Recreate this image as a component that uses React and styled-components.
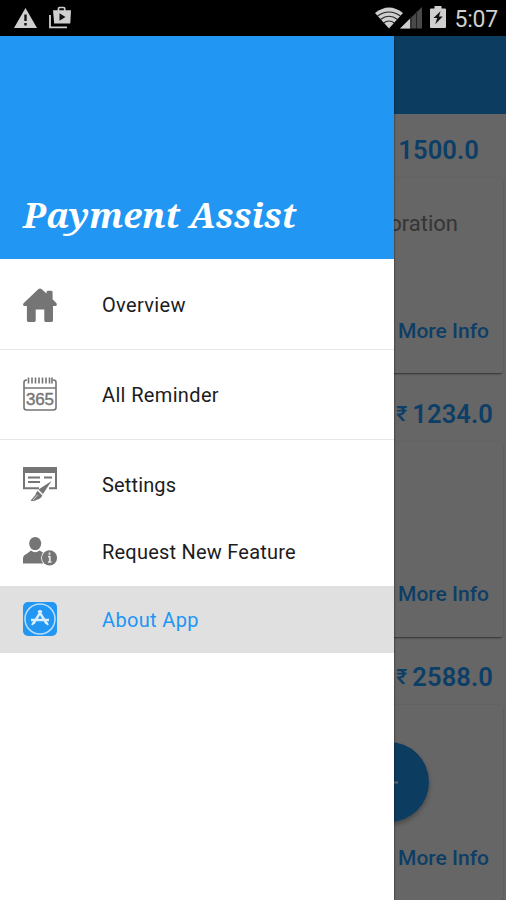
import React from "react";
import styled, { createGlobalStyle } from "styled-components";

const GlobalStyle = createGlobalStyle`
  * {
    box-sizing: border-box;
  }
  body {
    margin: 0;
    background: #000;
    font-family: Roboto, "Noto Sans", sans-serif;
  }
`

// whole phone screen
const Screen = styled.div`
  width: 506px;
  height: 900px;
  display: flex;
  flex-direction: column;
  overflow: hidden;
`

const StatusBar = styled.div`
  height: 36px;
  flex: none;
  display: flex;
  align-items: center;
  padding: 0 8px 0 13px;
  background: #000;
  color: #cfcfcf;
`

const StatusLeft = styled.div`
  display: flex;
  gap: 10px;
  flex: 1;
  padding-bottom: 2px;
`

const StatusRight = styled.div`
  display: flex;
  align-items: center;
`

const Network = styled.span`
  display: flex;
  padding-bottom: 1px;

  svg + svg {
    margin-left: -4px;
  }
`

const Battery = styled.span`
  display: flex;
  margin-left: 7px;
  padding-bottom: 2px;
`

const Clock = styled.span`
  margin-left: 8px;
  padding-top: 3px;
  font-size: 23px;
  line-height: 26px;
  letter-spacing: -0.2px;
`

const Body = styled.div`
  position: relative;
  flex: 1;
  overflow: hidden;
`

// page behind the drawer
const Page = styled.div`
  height: 864px;
  background: #fff;
`

const AppBar = styled.div`
  height: 78px;
  background: #2196f3;
`

const Reminder = styled.div`
  width: 503px;
  height: 263.5px;
  display: flex;
  flex-direction: column;
  align-items: flex-end;
`

const Amount = styled.div`
  height: 64px;
  display: flex;
  align-items: center;
  gap: 5px;
  padding: 8px ${(props) => props.$right}px 0 0;
  color: #1f9cff;
  font-size: 25.5px;
  font-weight: 600;
  letter-spacing: 0.1px;
`

const Rupee = styled.span`
  font-size: 21px;
  font-weight: 500;
`

const Details = styled.div`
  width: 100%;
  height: 195px;
  display: flex;
  flex-direction: column;
  align-items: flex-end;
  justify-content: space-between;
  padding: 33px 14px 29.5px 0;
  border-radius: 3px;
  box-shadow: 0 2px 2px -1px rgba(0, 0, 0, 0.5), 0 0 2px rgba(0, 0, 0, 0.15);
`

const Company = styled.span`
  margin-right: 31px;
  color: #858585;
  font-size: 22px;
  line-height: 26px;
`

const MoreInfo = styled.span`
  margin-top: auto;
  color: #1f9cff;
  font-size: 21px;
  font-weight: 500;
  line-height: 26px;
`

const Fab = styled.div`
  position: absolute;
  left: 349px;
  top: 706px;
  width: 80px;
  height: 80px;
  display: flex;
  align-items: center;
  justify-content: center;
  border-radius: 50%;
  background: #2196f3;
  box-shadow: 0 3px 5px rgba(0, 0, 0, 0.3);
`

const Scrim = styled.div`
  position: absolute;
  inset: 0;
  background: rgba(0, 0, 0, 0.6);
`

const Drawer = styled.div`
  position: absolute;
  left: 0;
  top: 0;
  bottom: 0;
  width: 394px;
  background: #fff;
  box-shadow: 0 0 2px rgba(0, 0, 0, 0.7);
`

const DrawerHeader = styled.div`
  height: 223px;
  display: flex;
  align-items: flex-end;
  padding: 0 0 21px 23px;
  background: #2196f3;
`

const Title = styled.h1`
  margin: 0;
  color: #fff;
  font-family: "Noto Serif", "DejaVu Serif Condensed", "DejaVu Serif", serif;
  font-size: 35px;
  font-style: italic;
  font-weight: 700;
  line-height: 46px;
  white-space: nowrap;
`

const Group = styled.div`
  padding: ${(props) => props.$pad};
  border-bottom: ${(props) => (props.$last ? "none" : "1px solid #e6e6e6")};
`

const Item = styled.div`
  height: 67.5px;
  display: flex;
  align-items: center;
  gap: 44px;
  padding-left: 22px;
  color: ${(props) => (props.$active ? "#2196f3" : "#1c1c1c")};
  background: ${(props) => (props.$active ? "#e0e0e0" : "transparent")};
  font-size: 20px;
  letter-spacing: ${(props) => props.$spacing || "0.35px"};
`

const Label = styled.span`
  padding-top: 1px;
`

const Icon = styled.svg`
  width: 36px;
  height: 36px;
  flex: none;
  color: #757575;
`

const HomeIcon = () => (
  <Icon viewBox="0 0 36 36" fill="currentColor">
    <path d="M16.2 2.2q1.800-1.600 3.600 0l4.800 4.400V5.200q0-1.400 1.400-1.400h3.200q1.400 0 1.400 1.400v7l3.700 3.700q1.400 2.400-.9 3.100H31v14.500q0 1.400-1.400 1.400h-6.100q-1.200 0-1.200-1.400V22.600h-8.600v10.900q0 1.400-1.300 1.400H6.300q-1.400 0-1.400-1.400V19H2.600q-2.600-.7-.8-3.100z" />
  </Icon>
)

const CalendarIcon = () => (
  <Icon viewBox="0 0 36 36" fill="none" stroke="currentColor" strokeWidth="1.6">
    <path d="M5 4H4.5Q2 4 2 6.500v25Q2 34 4.500 34h27q2.500 0 2.500-2.500v-25Q34 4 31.500 4H31M2 12h32" />
    <path d="M6.500 1.500v6M10 1.500v6M13.500 1.500v6M17 1.500v6M20.500 1.500v6M24 1.500v6M27.500 1.500v6M30 1.500v6" />
    <text x="18" y="29" textAnchor="middle" fill="currentColor" stroke="currentColor" strokeWidth=".4" fontFamily="Liberation Sans, sans-serif" fontSize="17" letterSpacing="-.2">365</text>
  </Icon>
)

const SettingsIcon = () => (
  <Icon viewBox="0 0 36 36">
    <path d="M1 1.500h34v5.500H1z" fill="currentColor" />
    <path d="M17 22.300H2V2h32v20.300h-7" fill="none" stroke="currentColor" strokeWidth="2" />
    <path d="M6 11.500h12M6 16h12M22 11.500h8" stroke="currentColor" strokeWidth="2" />
    <path d="M29.500 15 16.500 23.500l4.500 4.500z" fill="currentColor" />
    <path d="m16 24.500 4.500 4.500q-1.500 4-5 4.400-3.500 1.900-7 1.400l5-6q.4-2.300 2.500-4.300z" fill="currentColor" />
    <path d="m11 34 4.500-5M15.500 24.500l5 5" stroke="#fff" strokeWidth=".7" />
  </Icon>
)

const PersonIcon = () => (
  <Icon viewBox="0 0 36 36" fill="currentColor">
    <ellipse cx="13.200" cy="9.600" rx="6" ry="6.700" />
    <path d="M1 29.500v-5q0-3.500 3.500-4.500l4.500-3.500q4 3.500 8.500 0l4.500 2.500q-3.500 5.500-.5 10.500z" />
    <circle cx="27.500" cy="23.800" r="8.400" fill="#fff" />
    <circle cx="27.500" cy="23.800" r="7.600" />
    <path d="M27.500 18.500v2.300M26 22.700h1.800v5.300M26 28h3.500" fill="none" stroke="#e4e4e4" strokeWidth="1.700" />
  </Icon>
)

const AppIcon = () => (
  <Icon viewBox="0 0 36 36">
    <rect x="1" y="1" width="34" height="34" rx="5" fill="#2196f3" />
    <circle cx="18" cy="18" r="15" fill="none" stroke="#b9dcf6" strokeWidth="1.500" />
    <g fill="none" stroke="#d9edfb" strokeWidth="2.400">
      <path d="M16.500 9.500 24.500 22.500M19.500 9.500 11.500 22.500M9 19h18" />
      <path d="m11.500 21.500-1.500 2.500M24.500 21.500l1.500 2.500" strokeWidth="2" />
    </g>
  </Icon>
)

const WarningIcon = () => (
  <svg width="25" height="24" viewBox="0 0 25 24">
    <path d="M12.500 3 24 23H1z" fill="#cfcfcf" />
    <path d="M12.500 9.500v6.500M12.500 18v2.600" stroke="#111" strokeWidth="2.400" />
  </svg>
)

const StoreIcon = () => (
  <svg width="24" height="24" viewBox="0 0 24 24" fill="none" stroke="#cfcfcf">
    <path d="M2 10v12.300h17" strokeWidth="1.800" />
    <path d="M10.500 6V3.600q0-1.100 1.100-1.100h4q1.100 0 1.100 1.100V6" strokeWidth="1.700" />
    <path d="M5 5.300h18l-.7 13.200H6.200z" fill="#cfcfcf" stroke="none" />
    <path d="M11.500 8.300v7.400l6-3.700z" fill="#111" stroke="none" />
  </svg>
)

const WifiIcon = () => (
  <svg width="28" height="22" viewBox="0 0 28 22">
    <path d="M0 6q14-11 28 0L14 21.500z" fill="#cfcfcf" />
    <path d="M2.500 9q11.500-8 23 0M5.500 12.500q8.500-6.500 17 0M8.500 16q5.500-4 11 0" fill="none" stroke="#222" strokeWidth="1.100" />
  </svg>
)

const SignalIcon = () => (
  <svg width="24" height="22" viewBox="0 0 24 22">
    <path d="M1 21.500 23 0v21.500z" fill="#4a4a4a" />
    <path d="M1 21.500 11 11.700v9.800z" fill="#cfcfcf" />
    <path d="M12 9v13M17.500 4v18" stroke="#222" />
  </svg>
)

const BatteryIcon = () => (
  <svg width="16" height="22" viewBox="0 0 16 23" preserveAspectRatio="none">
    <path d="M4.500 0h7v2.500H15q1 0 1 1V22q0 1-1 1H1q-1 0-1-1V3.500q0-1 1-1h3.500z" fill="#cfcfcf" />
    <path d="m10.500 5.500-7 7h3.700l-2 6.500 7.500-8H9z" fill="#111" />
  </svg>
)

const reminders = [
  { amount: "1500.0", company: "oration", right: 24 },
  { amount: "1234.0", rupee: true, right: 10 },
  { amount: "2588.0", rupee: true, right: 10 },
];

function App() {
  return (
    <Screen>
      <GlobalStyle />
      <StatusBar>
        <StatusLeft>
          <WarningIcon />
          <StoreIcon />
        </StatusLeft>
        <StatusRight>
          <Network>
            <WifiIcon />
            <SignalIcon />
          </Network>
          <Battery>
            <BatteryIcon />
          </Battery>
          <Clock>5:07</Clock>
        </StatusRight>
      </StatusBar>
      <Body>
        <Page>
          <AppBar />
          {reminders.map((item) => (
            <Reminder key={item.amount}>
              <Amount $right={item.right}>
                {item.rupee && <Rupee>₹</Rupee>}
                {item.amount}
              </Amount>
              <Details>
                {item.company && <Company>{item.company}</Company>}
                <MoreInfo>More Info</MoreInfo>
              </Details>
            </Reminder>
          ))}
        </Page>
        <Fab>
          <svg width="17" height="17" viewBox="0 0 17 17" stroke="#fff" strokeWidth="2">
            <path d="M8.500 0v17M0 8.500h17" />
          </svg>
        </Fab>
        <Scrim />
        <Drawer>
          <DrawerHeader>
            <Title>Payment Assist</Title>
          </DrawerHeader>
          <Group $pad="12px 0 10.5px">
            <Item><HomeIcon /><Label>Overview</Label></Item>
          </Group>
          <Group $pad="10.5px 0 10.5px">
            <Item><CalendarIcon /><Label>All Reminder</Label></Item>
          </Group>
          <Group $pad="11px 0 0" $last>
            <Item $spacing="0.15px"><SettingsIcon /><Label>Settings</Label></Item>
            <Item $spacing="0.22px"><PersonIcon /><Label>Request New Feature</Label></Item>
            <Item $active><AppIcon /><Label>About App</Label></Item>
          </Group>
        </Drawer>
      </Body>
    </Screen>
  );
}


export default App;
